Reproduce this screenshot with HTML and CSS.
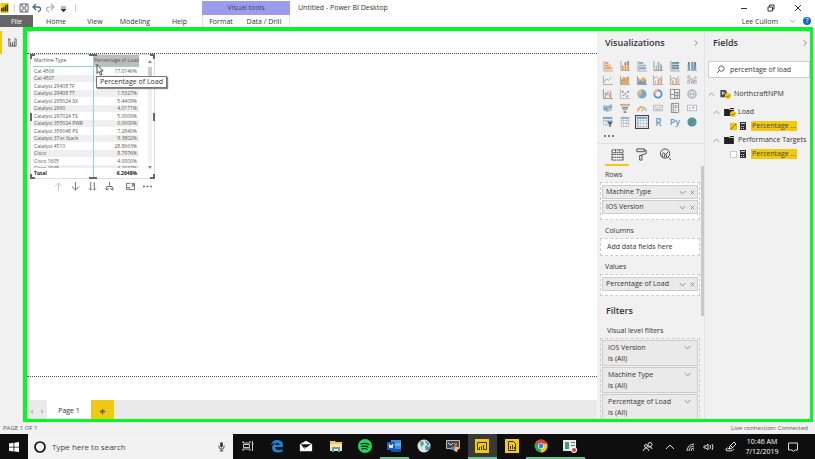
FILE: index.html
```html
<!DOCTYPE html>
<html lang="en">
<head>
<meta charset="utf-8">
<title>Untitled - Power BI Desktop</title>
<link rel="stylesheet" href="styles.css">
</head>
<body>
<svg class="defs" aria-hidden="true">
  <symbol id="down" viewBox="0 0 10 6"><path d="M1 1l4 4 4-4" fill="none" stroke="currentColor"/></symbol>
  <symbol id="right" viewBox="0 0 6 10"><path d="M1 1l4 4-4 4" fill="none" stroke="currentColor"/></symbol>
  <symbol id="x" viewBox="0 0 8 8"><path d="M1 1l6 6M7 1L1 7" fill="none" stroke="currentColor"/></symbol>
  <symbol id="calc" viewBox="0 0 6 8"><path d="M0 0h6v8H0z" fill="#333"/><path d="M1 1h4v1H1zM1 4h1v1H1zM3 4h1v1H3zM1 6h1v1H1zM3 6h1v1H3z" fill="#ccc"/></symbol>
  <symbol id="folder" viewBox="0 0 11 9"><path d="M0 1h5l1 1h5v7H0z" fill="#222"/><path d="M6 0h5v1H7z" fill="#222"/></symbol>
  <symbol id="badge" viewBox="0 0 8 8"><circle cx="4" cy="4" r="4" fill="#f2c811"/><path d="M2 4l1.500 1.500L6 3" fill="none" stroke="#554400"/></symbol>
</svg>

<header class="titlebar">
  <div class="quick">
    <svg class="logo" viewBox="0 0 10 11"><path d="M0 0h9v11H0z" fill="#f2c811"/><path d="M1 6h1v3H1zM3 5h1v4H3zM5 3h1v6H5zM7 2h1v7H7z" fill="#222" stroke="#222" stroke-width=".5"/></svg>
    <i class="sep"></i>
    <button aria-label="Save"><svg viewBox="0 0 10 10"><path d="M1 1h8v8H1zM3 1v3h4V1M3 9V6h4v3" fill="none" stroke="#666070"/></svg></button>
    <button aria-label="Undo"><svg viewBox="0 0 10 10"><path d="M4 1L1 4l3 3M1 4h5q3 0 2.500 3L6 9" fill="none" stroke="#3f7484" stroke-width="1.300"/></svg></button>
    <button aria-label="Redo"><svg viewBox="0 0 10 10"><path d="M6 1l3 3-3 3M9 4H4Q1 4 1.500 7L4 9" fill="none" stroke="#9fb2b8" stroke-width="1.200"/></svg></button>
    <button aria-label="Customize toolbar"><svg viewBox="0 0 10 10"><path d="M3 4h5M3 6h5L5.500 9z" fill="#333" stroke="#333" stroke-width=".7"/></svg></button>
    <i class="sep"></i>
  </div>
  <div class="context">Visual tools</div>
  <h1>Untitled - Power BI Desktop</h1>
  <div class="window-controls">
    <button aria-label="Minimize"><svg viewBox="0 0 8 8"><path d="M1 4.500h6" stroke="#333"/></svg></button>
    <button aria-label="Restore"><svg viewBox="0 0 8 8"><path d="M1 3h4.500v4H1zM2.500 3V1H7v4H5.500" fill="none" stroke="#333"/></svg></button>
    <button aria-label="Close"><svg viewBox="0 0 8 8"><use href="#x"/></svg></button>
  </div>
</header>

<nav class="ribbon">
  <button class="file">File</button>
  <button class="t-home">Home</button><button class="t-view">View</button><button class="t-model">Modeling</button><button class="t-help">Help</button>
  <div class="context-tabs"><button>Format</button><button>Data / Drill</button></div>
  <div class="user"><span>Lee Cullom</span><svg class="chev" viewBox="0 0 10 6"><use href="#down"/></svg><button class="help" aria-label="Help center">?</button></div>
</nav>

<main class="main">
  <aside class="rail"><button aria-label="Report view"><svg viewBox="0 0 10 10"><path d="M1 0v9h8M3 9V4M5 9V5M7 9V3M9 9V1M1 2h2M7 1h2" fill="none" stroke="#555"/></svg></button></aside>
  <div class="frame">
    <section class="report">
      <div class="canvas">
        <div class="visual">
          <i class="h tl"></i><i class="h tc"></i><i class="h tr"></i><i class="h ml"></i><i class="h mr"></i><i class="h bl"></i><i class="h bc"></i><i class="h br"></i>
          <table>
            <thead><tr><th>Machine Type</th><th class="sel">Percentage of Load</th></tr></thead>
            <tbody>
              <tr><td>Cat 4506</td><td>17.0146%</td></tr>
              <tr><td>Cat 4507</td><td></td></tr>
              <tr><td>Catalyst 29408 TF</td><td></td></tr>
              <tr><td>Catalyst 29408 TT</td><td>1.5327%</td></tr>
              <tr><td>Catalyst 295024 SX</td><td>5.4409%</td></tr>
              <tr><td>Catalyst 2960</td><td>4.0171%</td></tr>
              <tr><td>Catalyst 297024 TS</td><td>5.0000%</td></tr>
              <tr><td>Catalyst 355024 PWR</td><td>0.0000%</td></tr>
              <tr><td>Catalyst 356048 PS</td><td>7.2840%</td></tr>
              <tr><td>Catalyst 37xx Stack</td><td>9.3802%</td></tr>
              <tr><td>Catalyst 4510</td><td>28.8663%</td></tr>
              <tr><td>Cisco</td><td>8.7976%</td></tr>
              <tr><td>Cisco 1605</td><td>4.0000%</td></tr>
              <tr class="cut"><td><div>Cisco 2948</div></td><td><div>4.2047%</div></td></tr>
            </tbody>
            <tfoot><tr><td>Total</td><td>6.2648%</td></tr></tfoot>
          </table>
          <div class="vscroll"><svg viewBox="0 0 4 3"><path d="M0 3l2-3 2 3z" fill="#888"/></svg><i></i><svg viewBox="0 0 4 3"><path d="M0 0l2 3 2-3z" fill="#888"/></svg></div>
          <div class="tooltip">Percentage of Load</div>
          <svg class="cursor" viewBox="0 0 8 12"><path d="M1 .5v9l2-2 1.500 3.500 1.500-.7L4.500 7h2.700z" fill="#fff" stroke="#222" stroke-width=".8"/></svg>
        </div>
        <div class="drill">
          <button aria-label="Drill up" class="off"><svg viewBox="0 0 10 10"><path d="M5 10V1M1 5l4-4 4 4"/></svg></button>
          <button aria-label="Drill down"><svg viewBox="0 0 10 10"><path d="M5 0v9M1 5l4 4 4-4"/></svg></button>
          <button aria-label="Next level"><svg viewBox="0 0 10 10"><path d="M3 0v9M7 0v9M1 7l2 2 1-1M6 8l1 1 2-2"/></svg></button>
          <button aria-label="Expand all"><svg viewBox="0 0 10 10"><path d="M5 0v4M2 9V5h6v4M0 7l2 2 2-2M6 7l2 2 2-2"/></svg></button>
          <button aria-label="Focus mode" class="wide"><svg viewBox="0 0 10 10"><path d="M5 1.500H.5v7h9v-7H6M8.500 3L6 5.500M8.500 5V3h-2M1 6h3v2"/></svg></button>
          <button aria-label="More options"><svg viewBox="0 0 10 10"><path d="M0 5h2M4 5h2M8 5h2" stroke-width="1.500"/></svg></button>
        </div>
      </div>
      <footer class="pages">
        <div class="nav"><button aria-label="Previous page"><svg viewBox="0 0 4 6"><path d="M4 0v6L0 3z" fill="#bbb"/></svg></button><button aria-label="Next page"><svg viewBox="0 0 4 6"><path d="M0 0v6l4-3z" fill="#bbb"/></svg></button></div>
        <button class="page">Page 1</button>
        <button class="add" aria-label="New page"><svg viewBox="0 0 8 8"><path d="M4 1v6M1 4h6" stroke="#555" stroke-width="1.500"/></svg></button>
      </footer>
    </section>

    <section class="viz">
      <h2>Visualizations <svg class="next" viewBox="0 0 6 10"><use href="#right"/></svg></h2>
      <div class="gallery">
        <button aria-label="Stacked bar"><svg viewBox="0 0 11 11"><path d="M1 0v11h10" fill="none" stroke="#999"/><path d="M2 1h4v2H2zM2 4h6v2H2zM2 7h7v2H2z" fill="#e8883a"/><path d="M6 4h3v2H6zM8 7h3v2H8z" fill="#f0be88"/></svg></button>
        <button aria-label="Stacked column"><svg viewBox="0 0 11 11"><path d="M1 0v10.500h10" fill="none" stroke="#999"/><path d="M2 5h2v5H2zM5 3h2v7H5zM8 2h2v8H8z" fill="#e8883a"/><path d="M5 1h2v3H5zM8 0h2v4H8z" fill="#888"/></svg></button>
        <button aria-label="Clustered bar"><svg viewBox="0 0 11 11"><path d="M1 0v11h10" fill="none" stroke="#999"/><path d="M2 1h5v2H2zM2 7h8v2H2z" fill="#5e9cc8"/><path d="M2 4h8v2H2z" fill="#9ab"/></svg></button>
        <button aria-label="Clustered column"><svg viewBox="0 0 11 11"><path d="M1 0v10.500h10M3.500 5v5M8.500 3v7" fill="none" stroke="#888"/><path d="M5 1h2v9H5z" fill="#8ab"/><path d="M9 5h1v5H9z" fill="#5e9cc8"/></svg></button>
        <button aria-label="100% stacked bar"><svg viewBox="0 0 11 11"><path d="M1 0v11h10" fill="none" stroke="#999"/><path d="M2 1h8v2H2zM2 4h8v2H2zM2 7h8v2H2z" fill="#666"/><path d="M2 1h4v2H2zM2 4h3v2H2zM2 7h6v2H2z" fill="#4b97cc"/></svg></button>
        <button aria-label="100% stacked column"><svg viewBox="0 0 11 11"><path d="M0 10.500h11" stroke="#999"/><path d="M1 1h2v9H1zM5 1h2v9H5zM8 1h2v9H8z" fill="#666"/><path d="M1 4h2v6H1zM5 3h2v7H5zM8 6h2v4H8z" fill="#4b97cc"/></svg></button>

        <button aria-label="Line"><svg viewBox="0 0 11 11"><path d="M.5 1v9.500H11M1 8l3-4 2 2 4-4" fill="none" stroke="#888" stroke-width=".8"/></svg></button>
        <button aria-label="Area"><svg viewBox="0 0 11 11"><path d="M1 5l3-3 2 1 4-2v9H1z" fill="#e59a58"/><path d="M.5 1v9.500H11M1 8l3-2 2 1 4-4" fill="none" stroke="#997"/></svg></button>
        <button aria-label="Stacked area"><svg viewBox="0 0 11 11"><path d="M1 3l3 2 3-3 3 3v5H1z" fill="#e8a33a"/><path d="M1 8l3-2 3 2 3-3v5H1z" fill="#4b97cc"/><path d="M.5 1v9.500H11" fill="none" stroke="#888"/></svg></button>
        <button aria-label="Line and stacked column"><svg viewBox="0 0 11 11"><path d="M.5 0v10.500H11M1 4l3-2 3 3 3-4" fill="none" stroke="#888" stroke-width=".8"/><path d="M2 6h1v4H2zM5 5h2v5H5zM8 3h2v7H8z" fill="#d99a70"/></svg></button>
        <button aria-label="Line and clustered column"><svg viewBox="0 0 11 11"><path d="M.5 0v10.500H11M1 5l3-2 3 2 3-4M9.500 4v6" fill="none" stroke="#888" stroke-width=".8"/><path d="M2 6h2v4H2zM6 4h2v6H6z" fill="#d99a70"/></svg></button>
        <button aria-label="Ribbon"><svg viewBox="0 0 11 11"><path d="M1 10V6h2v4M5 10V7h2v3M8 10V6h2v4M1 4V1h2v2l3 2 3-3h1v2L7 7 4 5z" fill="none" stroke="#888" stroke-width=".8"/></svg></button>

        <button aria-label="Waterfall"><svg viewBox="0 0 11 11"><path d="M.5 0v10.500H11M2.500 10V4M4 4v3M8.500 2v8" fill="none" stroke="#888"/><path d="M5 2h1v5H5zM7 5h1v4H7z" fill="#d76b49"/></svg></button>
        <button aria-label="Scatter"><svg viewBox="0 0 11 11"><path d="M.5 0v10.500H11" fill="none" stroke="#aaa"/><g fill="#777"><circle cx="3" cy="3" r="1"/><circle cx="6" cy="5" r="1"/><circle cx="9" cy="3" r="1"/><circle cx="8" cy="8" r="1"/></g><circle cx="4" cy="7" r="1" fill="#4b97cc"/></svg></button>
        <button aria-label="Pie"><svg viewBox="0 0 11 11"><circle cx="5.500" cy="5.500" r="5" fill="#5e9cc8"/><path d="M5.500 5.500V.5a5 5 0 0 0-5 5z" fill="#e7a36b"/><path d="M5.500 5.500h-5a5 5 0 0 0 2 4z" fill="#aaa"/></svg></button>
        <button aria-label="Donut"><svg viewBox="0 0 11 11"><circle cx="5.500" cy="5.500" r="4" fill="none" stroke="#3a7dc4" stroke-width="2"/><path d="M1.500 5.500a4 4 0 0 1 4-4" fill="none" stroke="#e7a36b" stroke-width="2"/></svg></button>
        <button aria-label="Treemap"><svg viewBox="0 0 11 11"><path d="M.5.5h10v10H.5zM5 .5v10M5 4h5.500M.5 6H5M8 4v6.500M5 7h5.500" fill="none" stroke="#777"/></svg></button>
        <button aria-label="Map"><svg viewBox="0 0 11 11"><circle cx="5.500" cy="5.500" r="4.500" fill="#dfe8e8" stroke="#899"/><path d="M1 5.500h9M5.500 1Q1 5.500 5.500 10M5.500 1q4.500 4.500 0 9" fill="none" stroke="#899" stroke-width=".7"/></svg></button>

        <button aria-label="Filled map"><svg viewBox="0 0 11 11"><path d="M0 2l4 1 6-2v7l-5 2-5-2z" fill="#a9bfca"/><path d="M1 5h4v3H1zM7 3h3v2H7z" fill="#5e9cc8"/><path d="M4 3v6M0 5h10" stroke="#888" stroke-width=".6"/></svg></button>
        <button aria-label="Funnel"><svg viewBox="0 0 11 11"><path d="M0 1h11v2H0z" fill="#d99a60"/><path d="M2 4h7v2H2zM3 7h5v1H3zM4 9h3v2H4z" fill="#777"/></svg></button>
        <button aria-label="Gauge"><svg viewBox="0 0 11 11"><path d="M1 9a4.500 4.500 0 0 1 9 0" fill="none" stroke="#bba" stroke-width="2"/><path d="M1 9a4.500 4.500 0 0 1 4.500-4.500" fill="none" stroke="#e8a33a" stroke-width="2"/><path d="M5 9l3-3" stroke="#555"/></svg></button>
        <button aria-label="Card"><svg viewBox="0 0 11 11"><path d="M.5 2.500h10v6H.5zM2 5h2M5 5h1M7 5h2M2 7h7" fill="none" stroke="#999" stroke-width=".8"/></svg></button>
        <button aria-label="Multi-row card"><svg viewBox="0 0 11 11"><path d="M1.500.5h8v10h-8zM3.500 1v9M5 3h3M5 5h3M5 8h2" fill="none" stroke="#777"/></svg></button>
        <button aria-label="KPI"><svg viewBox="0 0 11 11"><path d="M.5 2.500h10v6H.5z" fill="#fff" stroke="#999" stroke-width=".8"/><path d="M2 5h2v1H2z" fill="#777"/><path d="M6 4h2v2H6z" fill="#4b97cc"/></svg></button>

        <button aria-label="Slicer"><svg viewBox="0 0 11 11"><path d="M.5.500h9v8h-9zM0 4h10M3.500 1v8M6.500 1v8" fill="#fff" stroke="#8aa" stroke-width=".8"/><path d="M0 0h10v2H0z" fill="#4b97cc"/><path d="M4 5h7L8.500 8v3H7V8z" fill="#444"/></svg></button>
        <button aria-label="Table"><svg viewBox="0 0 11 11"><path d="M1.500.5h8v10h-8zM1 4h9M1 7h9M4 1v9M7 1v9" fill="#fff" stroke="#999" stroke-width=".7"/><path d="M1 0h9v2H1z" fill="#71a8cc"/></svg></button>
        <button aria-label="Matrix" class="on"><svg viewBox="0 0 11 11"><path d="M.5.5h10v10H.500zM1 4h9M1 7h9M4 1v9M7 1v9" fill="#fff" stroke="#aab" stroke-width=".7"/><path d="M0 0h11v2H0z" fill="#5e9cc8"/><path d="M0 2h2v9H0z" fill="#9fc4de"/></svg></button>
        <button aria-label="R script" class="rpy">R</button>
        <button aria-label="Python script" class="rpy py">Py</button>
        <button aria-label="ArcGIS"><svg viewBox="0 0 11 11"><circle cx="5.500" cy="5.500" r="5" fill="#287dae"/><path d="M2 2l3-1 1 2-2 2-3 1zM7 4l3 1-1 3-3 2-1-3z" fill="#54904c"/></svg></button>
      </div>
      <button class="dots" aria-label="More visuals"><i></i><i></i><i></i></button>
      <div class="tabs">
        <button aria-label="Fields" class="on"><svg viewBox="0 0 14 14"><path d="M1 2h12v3H1zM1 6v7M13 6v7M1 7h12M1 10h12M1 13h12M5 2v3M9 2v3" fill="none" stroke="#444" stroke-dasharray="2 .5"/></svg></button>
        <button aria-label="Format"><svg viewBox="0 0 14 14"><path d="M2 1h8v3H2zM10 2.500h2V6L6 8M5 8h2.500v5H5z" fill="none" stroke="#444"/></svg></button>
        <button aria-label="Analytics"><svg viewBox="0 0 14 14"><circle cx="6.500" cy="6" r="5" fill="none" stroke="#444"/><path d="M3 8l2-3 2 2 3-3M4 10V8M6 10V7M8 10V7M10 10l3 3" fill="none" stroke="#444"/></svg></button>
      </div>
      <div class="scroll">
        <div class="wells">
          <h3>Rows</h3>
          <div class="well tall"><div class="pill">Machine Type<svg viewBox="0 0 10 6"><use href="#down"/></svg><svg class="sx" viewBox="0 0 8 8"><use href="#x"/></svg></div><div class="pill">IOS Version<svg viewBox="0 0 10 6"><use href="#down"/></svg><svg class="sx" viewBox="0 0 8 8"><use href="#x"/></svg></div></div>
          <h3>Columns</h3>
          <div class="well empty">Add data fields here</div>
          <h3>Values</h3>
          <div class="well"><div class="pill">Percentage of Load<svg viewBox="0 0 10 6"><use href="#down"/></svg><svg class="sx" viewBox="0 0 8 8"><use href="#x"/></svg></div></div>
          <h2>Filters</h2>
          <h3>Visual level filters</h3>
          <div class="filters">
            <div class="filter"><span>IOS Version<svg viewBox="0 0 10 6"><use href="#down"/></svg></span><span>is (All)</span></div>
            <div class="filter"><span>Machine Type<svg viewBox="0 0 10 6"><use href="#down"/></svg></span><span>is (All)</span></div>
            <div class="filter"><span>Percentage of Load<svg viewBox="0 0 10 6"><use href="#down"/></svg></span><span>is (All)</span></div>
          </div>
        </div>
        <i class="thumb"></i>
      </div>
    </section>

    <section class="fields">
      <h2>Fields <svg class="next" viewBox="0 0 6 10"><use href="#right"/></svg></h2>
      <label class="search"><svg viewBox="0 0 10 10"><circle cx="6" cy="4" r="3" fill="none" stroke="#555"/><path d="M4 6L1 9" stroke="#555"/></svg><input type="text" value="percentage of load" aria-label="Search fields"></label>
      <div class="tree">
        <div class="node root"><svg class="caret" viewBox="0 0 10 6"><path d="M1 5l4-4 4 4"/></svg><span class="ico"><svg viewBox="0 0 11 10"><path d="M1 0h6l2 2v3H7v4H1z" fill="#444"/><path d="M3 2h2v4H3zM6 3h1v2H6z" fill="#ddd"/></svg><svg class="bdg" viewBox="0 0 8 8"><use href="#badge"/></svg></span>NorthcraftNPM</div>
        <div class="node sub"><svg class="caret" viewBox="0 0 10 6"><path d="M1 5l4-4 4 4"/></svg><span class="ico"><svg viewBox="0 0 11 9"><use href="#folder"/></svg><svg class="bdg" viewBox="0 0 8 8"><use href="#badge"/></svg></span>Load</div>
        <label class="node leaf"><input type="checkbox" checked><svg class="calc" viewBox="0 0 6 8"><use href="#calc"/></svg><mark>Percentage ...</mark></label>
        <div class="node sub"><svg class="caret" viewBox="0 0 10 6"><path d="M1 5l4-4 4 4"/></svg><span class="ico"><svg viewBox="0 0 11 9"><use href="#folder"/></svg></span>Performance Targets</div>
        <label class="node leaf"><input type="checkbox"><svg class="calc" viewBox="0 0 6 8"><use href="#calc"/></svg><mark>Percentage ...</mark></label>
      </div>
    </section>
  </div>
</main>

<div class="status"><span>PAGE 1 OF 1</span><span>Live connection: Connected</span></div>

<footer class="taskbar">
  <button class="start" aria-label="Start"><svg viewBox="0 0 10 10"><path d="M0 1.500l4.500-.7v4H0zM5.300.7L10 0v4.800H5.300zM0 5.500h4.500v4L0 8.800zM5.300 5.500H10V10l-4.700-.6z" fill="#fff"/></svg></button>
  <label class="tsearch"><svg class="ring" viewBox="0 0 12 12"><circle cx="6" cy="6" r="5" fill="none" stroke="#111" stroke-width="1.700"/></svg><input type="text" placeholder="Type here to search" aria-label="Type here to search"><svg class="mic" viewBox="0 0 8 12"><rect x="2.500" y="1" width="3" height="6" rx="1.500" fill="#333"/><path d="M1 5v1a3 3 0 0 0 6 0V5M4 9v2M2 11h4" fill="none" stroke="#333"/></svg></label>
  <div class="apps">
    <button aria-label="Task view"><svg viewBox="0 0 14 14"><path d="M2 2v2h7V2M2 12v-2h7v2M2.500 5.500h6v3h-6zM11.500 2v10M10.500 5h2" fill="none" stroke="#ccc"/></svg></button>
    <button aria-label="Edge"><svg viewBox="0 0 14 14"><path d="M1 6Q2 1 7.500 1T13 7v1H5q.5 3 4 3 2 0 3.500-1v2.500Q11 13.500 8 13.500q-6 0-6-5Q2 6 5 4 2.500 4 1 6zM5 6h4.500Q9.500 3.800 7.500 3.800T5 6z" fill="#1683d8" fill-rule="evenodd"/></svg></button>
    <button aria-label="Mail"><svg viewBox="0 0 16 14"><path d="M1 5l7-4 7 4v8H1z" fill="#fff"/><path d="M2 5h12L8 9 6 8l1 3z" fill="#111"/></svg></button>
    <button aria-label="File Explorer"><svg viewBox="0 0 14 14"><path d="M1 2h5l1 1h6v9H1z" fill="#f1c75b"/><path d="M1 5h12v7H1z" fill="#ffe39a"/><path d="M3 8h8v5H9v-3H5v3H3z" fill="#49a3db"/></svg></button>
    <button aria-label="Spotify"><svg viewBox="0 0 14 14"><circle cx="7" cy="7" r="7" fill="#1ed760"/><path d="M3 5q4-1.500 8 .5M3.500 7.500q3.500-1 6.500.5M4 9.800q3-.8 5 .4" fill="none" stroke="#111" stroke-width="1.200" stroke-linecap="round"/></svg></button>
    <button aria-label="Word" class="open"><svg viewBox="0 0 14 14"><path d="M4 1h10v12H4z" fill="#3f8cdb"/><path d="M4 4h10v3H4z" fill="#65b1ed"/><path d="M4 10h10v3H4z" fill="#1750a0"/><path d="M0 3h8v8H0z" fill="#185abd"/><path d="M2 5l1 4 1-3 1 3 1-4" fill="none" stroke="#fff"/></svg></button>
    <button aria-label="Globe"><svg viewBox="0 0 14 14"><circle cx="7" cy="7" r="6.500" fill="#dae5e8"/><path d="M3 3l3-1 1 3-3 3zM8 7l3-1v4l-2 2z" fill="#5c9f7a"/><path d="M8 1l4 3v3L9 4zM9 10l4-3-1 5z" fill="#408bc2"/></svg></button>
    <button aria-label="Remote monitor"><svg viewBox="0 0 14 14"><path d="M.5 1.500h13v8H.500z" fill="#404950" stroke="#bbb"/><path d="M2 4l3 2 2-2" fill="none" stroke="#ddd"/><path d="M8 4h3v4H8z" fill="#df5944"/><path d="M5 8h4v3H5z" fill="#4987d8"/><path d="M9 8h4l-2 5-3-1z" fill="#f1c644"/></svg></button>
    <button aria-label="Power BI Desktop" class="open active"><svg viewBox="0 0 14 14"><path d="M0 0h14v14H0z" fill="#f2c811"/><path d="M2.500 3.500h9v7H8M2.500 4v6.500H4" fill="none" stroke="#3b3100"/><path d="M4 8h1v3H4zM6 7h1v4H6zM8 6h1v5H8z" fill="#3b3100"/></svg></button>
    <button aria-label="Report Builder"><svg viewBox="0 0 14 14"><path d="M0 0h14v14H0z" fill="#f2c811"/><path d="M3.500 2.500h5l2 2v7h-7z" fill="none" stroke="#3b3100"/><path d="M5 7h1v3H5zM7 6h1v4H7zM9 8h1v2H9z" fill="#3b3100"/></svg></button>
    <button aria-label="Chrome" class="open"><svg viewBox="0 0 14 14"><circle cx="7" cy="7" r="6.500" fill="#32a852"/><path d="M7 7L1.400 3.700A6.500 6.500 0 0 1 12.700 4z" fill="#e34133"/><path d="M7 7l5.700-3A6.500 6.500 0 0 1 7 13.500z" fill="#f9c31b"/><circle cx="7" cy="7" r="3" fill="#fff"/><circle cx="7" cy="7" r="2.400" fill="#3f7fe8"/></svg></button>
    <button aria-label="Recorder" class="open"><svg viewBox="0 0 14 14"><path d="M0 1h13v11H0z" fill="#e8ece9"/><path d="M2 3h4v7H2z" fill="#4a9c72"/><path d="M8 3h4v1H8zM8 6h4v1H8z" fill="#777"/><circle cx="11" cy="11" r="3" fill="#fff"/><circle cx="11" cy="11" r="2" fill="#d93c34"/></svg></button>
  </div>
  <div class="tray">
    <button class="people" aria-label="People"><svg viewBox="0 0 10 10"><circle cx="3" cy="4" r="1.500"/><circle cx="7" cy="2.500" r="2"/><path d="M0 9q1-3 3-3t3 3M5 5q4-1 4 2"/></svg></button>
    <button class="hidden-icons" aria-label="Show hidden icons"><svg viewBox="0 0 10 10"><path d="M1 7l4-4 4 4"/></svg></button>
    <button aria-label="Network"><svg viewBox="0 0 10 10"><path d="M2 9a7 7 0 0 1 7-7M4 9a5 5 0 0 1 5-5M6 9a3 3 0 0 1 3-3M8 8h1"/></svg></button>
    <button aria-label="Volume"><svg viewBox="0 0 10 10"><path d="M0 4h2l2-2v6L2 6H0zM6 3q1 2 0 4M8 2q2 3 0 6"/></svg></button>
    <button class="pen" aria-label="Ink"><svg viewBox="0 0 10 10"><path d="M3 7l1-3 4-4 2 2-4 4zM5 4l2 2M4 7q-3-2-4 0t3 2 5-2"/></svg></button>
    <time><span>10:46 AM</span><span>7/12/2019</span></time>
    <button class="notes" aria-label="Notifications"><svg viewBox="0 0 10 10"><path d="M.5 1h9v7H7L5.500 9.500 4 8H.5z"/></svg></button>
  </div>
</footer>
</body>
</html>
```
FILE: styles.css
```css
* { box-sizing: border-box; }
body { margin: 0; height: 100vh; display: flex; flex-direction: column; overflow: hidden; background: #fff; color: #333; font-family: "Open Sans", "Noto Sans", sans-serif; font-size: 7px; line-height: 10px; }
button { margin: 0; padding: 0; border: 0; background: none; color: inherit; font: inherit; }
h1, h2, h3 { margin: 0; font-weight: 400; }
svg { display: block; flex: none; overflow: visible; }
.defs { position: absolute; width: 0; height: 0; }

.titlebar { display: flex; height: 15px; flex: none; align-items: center; }
.quick { display: flex; align-items: center; width: 202px; padding-top: 1px; }
.quick svg { width: 10px; height: 10px; }
.quick button { width: 13px; }
.quick .sep { width: 1px; height: 8px; margin: 0 4px; background: #ccc; }
.context { width: 88px; height: 14px; align-self: flex-start; margin-top: 1px; background: #9c9ced; color: #446; text-align: center; line-height: 13px; }
h1 { flex: 1; padding-left: 8px; font-size: 7px; }
.window-controls { display: flex; padding-right: 4px; }
.window-controls button { width: 27px; display: grid; place-items: center; }
.window-controls svg { width: 8px; height: 8px; }

.ribbon { display: flex; height: 12px; flex: none; line-height: 13px; }
.ribbon .file { width: 33px; background: #666; color: #fff; }
.t-home { width: 46px; }
.t-view { width: 32px; }
.t-model { width: 48px; }
.t-help { width: 41px; }
.context-tabs { display: flex; width: 88px; margin-left: 2px; border: 1px solid #e4e4e4; border-width: 0 1px; }
.context-tabs button { width: 36px; }
.context-tabs button + button { flex: 1; }
.user { display: flex; align-items: center; gap: 11px; margin-left: auto; padding-right: 4px; }
.user .chev { width: 7px; height: 4px; color: #888; }
.user .help { width: 8px; height: 8px; margin-left: -4px; border-radius: 50%; background: #1668b8; color: #fff; font-size: 7px; line-height: 8px; }

.main { display: flex; flex: 1; min-height: 0; padding-right: 2px; }
.rail { width: 23px; flex: none; background: #f1f1f1; padding-top: 4px; }
.rail button { display: grid; place-items: center; width: 23px; height: 23px; border-left: 2px solid #f2c811; }
.rail svg { width: 9px; height: 9px; }
.frame { display: flex; flex: 1; min-width: 0; border: 4px solid #00fa22; border-width: 4px 3px 3px 4px; background: #f1f1f1; }

.report { display: flex; flex: 1; min-width: 0; flex-direction: column; background: #fff; }
.canvas { flex: 1; margin: 22px 0 23px; border: 1px dotted #555; border-width: 1px 0; padding: 0 3px; }
.visual { position: relative; display: flex; align-items: flex-start; justify-content: space-between; width: 125px; height: 125px; padding: 0 2px; border: 1px solid #ddd; }
.visual table { width: 106px; table-layout: fixed; border-collapse: separate; border-spacing: 0; color: #555; font-size: 5px; line-height: 7px; }
.visual th { height: 12px; padding: 0 1px; border-bottom: 1px solid #8cd9d2; font-weight: 400; text-align: left; white-space: nowrap; }
.visual th:first-child { width: 60px; }
.visual .sel { padding: 0; background: #bdbdbd; }
.visual td { height: 8px; padding: 0 2px 0 1px; white-space: nowrap; }
.visual tr:nth-child(even) td { height: 7px; background: #efefef; }
.visual td + td, .visual th + th { border-left: 1px solid #8cd9d2; text-align: right; }
.visual tbody .cut td { height: 3px; }
.cut div { height: 3px; overflow: hidden; }
.visual tfoot td { height: 10px; color: #222; font-weight: 700; }
.vscroll { display: flex; flex-direction: column; align-self: stretch; align-items: center; width: 4px; padding: 5px 0 9px; }
.vscroll svg { width: 4px; height: 3px; }
.vscroll i { flex: 1; width: 4px; margin: 4px 0; background: linear-gradient(#ccc 20px, #f1f1f1 20px); }
.h { position: absolute; width: 5px; height: 5px; border: 0 solid #666; }
.tl { top: -1px; left: -1px; border-width: 2px 0 0 2px; }
.tr { top: -1px; right: -1px; border-width: 2px 2px 0 0; }
.bl { bottom: -1px; left: -1px; border-width: 0 0 2px 2px; }
.br { bottom: -1px; right: -1px; border-width: 0 2px 2px 0; }
.tc { top: -1px; left: 58px; width: 8px; border-top-width: 2px; }
.bc { bottom: -1px; left: 58px; width: 8px; border-bottom-width: 2px; }
.ml { top: 58px; left: -1px; height: 8px; border-left-width: 2px; }
.mr { top: 58px; right: -1px; height: 8px; border-right-width: 2px; }
.tooltip { position: absolute; top: 21px; left: 65px; padding: 0 3px; border: 1px solid #777; background: #fff; box-shadow: 1px 1px 1px #888; white-space: nowrap; }
.cursor { position: absolute; top: 9px; left: 65px; width: 8px; height: 12px; }
.drill { display: flex; padding: 3px 0 0 20px; }
.drill button { width: 17px; display: grid; place-items: center; }
.drill .wide { width: 21px; padding-left: 3px; }
.drill svg { width: 9px; height: 9px; fill: none; stroke: #666; }
.drill .off { opacity: .4; }
.pages { display: flex; height: 19px; flex: none; background: #eaeaea; line-height: 22px; }
.nav { display: flex; justify-content: space-between; align-items: center; width: 20px; padding: 4px 3px 0; }
.nav svg { width: 3px; height: 5px; }
.page { width: 44px; background: #fff; }
.add { display: grid; place-items: center; width: 23px; padding-top: 4px; background: #efca12; }
.add svg { width: 7px; height: 7px; }

h2 { display: flex; align-items: center; justify-content: space-between; font-size: 9px; line-height: 12px; font-weight: 600; }
.next { width: 4px; height: 8px; color: #555; }
.viz { display: flex; flex-direction: column; width: 108px; flex: none; border-right: 1px solid #e2e2e2; }
.viz > h2 { padding: 6px 6px 10px 8px; }
.gallery { display: grid; grid-template-columns: repeat(6, 1fr); grid-auto-rows: 14px; padding: 0 4px 0 3px; }
.gallery button { display: grid; place-items: center; }
.gallery svg { width: 10px; height: 10px; opacity: .85; }
.gallery .on { width: 14px; justify-self: center; border: 1px solid #444; background: #ddd; }
.gallery .rpy { color: #6499c4; font-size: 10px; line-height: 14px; font-weight: 600; }
.gallery .py { font-size: 9px; }
.dots { display: flex; gap: 2px; padding: 6px 0 6px 7px; border-bottom: 1px solid #e2e2e2; }
.dots i { width: 2px; height: 2px; background: #555; border-radius: 1px; }
.tabs { display: flex; padding-left: 8px; }
.tabs button { display: grid; place-items: center; width: 24px; height: 22px; border-bottom: 2px solid transparent; }
.tabs .on { border-color: #f2c811; }
.tabs svg { width: 13px; height: 13px; }
.scroll { display: flex; flex: 1; min-height: 0; overflow: hidden; }
.thumb { width: 3px; height: 150px; background: #c9c9c9; }
.wells { flex: 1; min-width: 0; padding: 1px 1px 0 3px; }
h3 { padding-left: 5px; font-size: 7px; line-height: 15px; }
.well { height: 22px; margin-bottom: 3px; padding: 2px 1px; border: 1px dashed #ccc; background: #fff; }
.well.tall { height: 38px; }
.well.empty { height: 18px; padding: 0 6px; line-height: 15px; }
.pill { display: flex; align-items: center; gap: 4px; height: 14px; margin-bottom: 1px; padding: 0 2px 0 3px; border: 1px solid #ccc; background: #eaeaea; white-space: nowrap; }
.pill svg { width: 7px; height: 5px; color: #666; }
.pill svg:first-of-type { margin-left: auto; }
.pill .sx { width: 5px; height: 5px; }
.wells h2 { padding: 6px 0 6px 6px; }
.wells h2 + h3 { padding-left: 7px; }
.filters { padding: 1px; border: 1px dashed #ccc; }
.filter { height: 26px; margin-bottom: 1px; padding: 1px 6px 0 5px; border: 1px solid #ccc; background: #eaeaea; }
.filter span { display: flex; align-items: center; justify-content: space-between; line-height: 11px; }
.filter svg { width: 7px; height: 5px; color: #666; }

.fields { width: 105px; flex: none; }
.fields > h2 { padding: 6px 3px 12px 8px; }
.search { display: flex; align-items: center; gap: 5px; height: 17px; margin: 0 0 9px 3px; padding-left: 7px; border: 1px solid #ccc; background: #fff; }
.search svg { width: 9px; height: 9px; }
.search input, .tsearch input { flex: 1; min-width: 0; padding: 0; border: 0; background: none; color: #333; font: inherit; outline: 0; }
.node { display: flex; align-items: center; height: 14px; white-space: nowrap; }
.node.root { margin-bottom: 4px; padding-left: 3px; }
.node.sub { padding-left: 8px; }
.node.leaf { padding-left: 25px; }
.caret { width: 7px; height: 5px; margin-right: 4px; fill: none; stroke: #777; }
.ico { position: relative; width: 14px; }
.ico svg { width: 10px; height: 8px; }
.root .ico { width: 15px; }
.ico .bdg { position: absolute; left: 6px; top: 3px; width: 6px; height: 6px; }
.node input { appearance: none; width: 7px; height: 7px; margin: 0 3px 0 0; border: 1px solid #ccc; background: #fff; }
.node input:checked { border-color: #e8bc00; background: linear-gradient(135deg, #f2c811 40%, #806600 50%, #f2c811 60%); }
.calc { width: 6px; height: 8px; margin-right: 5px; }
mark { padding: 0 1px; background: #f2c811; color: #444; }

.status { display: flex; justify-content: space-between; align-items: center; height: 12px; flex: none; padding: 0 7px 0 3px; background: #f1f1f1; font-size: 6px; color: #555; }
.taskbar { display: flex; height: 25px; flex: none; background: #0e0e0e; color: #fff; }
.start { display: grid; place-items: center; width: 28px; }
.start svg { width: 10px; height: 10px; }
.tsearch { display: flex; align-items: center; gap: 6px; width: 205px; padding: 0 8px 0 6px; background: #f2f2f2; font-size: 8px; }
.tsearch input::placeholder { color: #444; opacity: 1; }
.ring { width: 12px; height: 12px; }
.mic { width: 7px; height: 11px; }
.apps { display: grid; grid-template-columns: repeat(12, 1fr); width: 352px; }
.apps button { display: grid; place-items: center; border-bottom: 2px solid transparent; }
.apps svg { width: 14px; height: 14px; }
.apps .open { border-color: #69c08c; }
.apps .active { background: #393939; }
.tray { display: flex; align-items: center; margin-left: auto; padding-right: 11px; }
.tray button { display: grid; place-items: center; width: 19px; }
.tray svg { width: 10px; height: 10px; fill: none; stroke: #ddd; stroke-width: 1px; }
.tray .people { width: 25px; }
.tray .hidden-icons { width: 20px; }
.tray .pen { width: 25px; }
.tray time { display: flex; flex-direction: column; width: 38px; text-align: center; white-space: nowrap; }
.tray .notes { width: 23px; }
```
